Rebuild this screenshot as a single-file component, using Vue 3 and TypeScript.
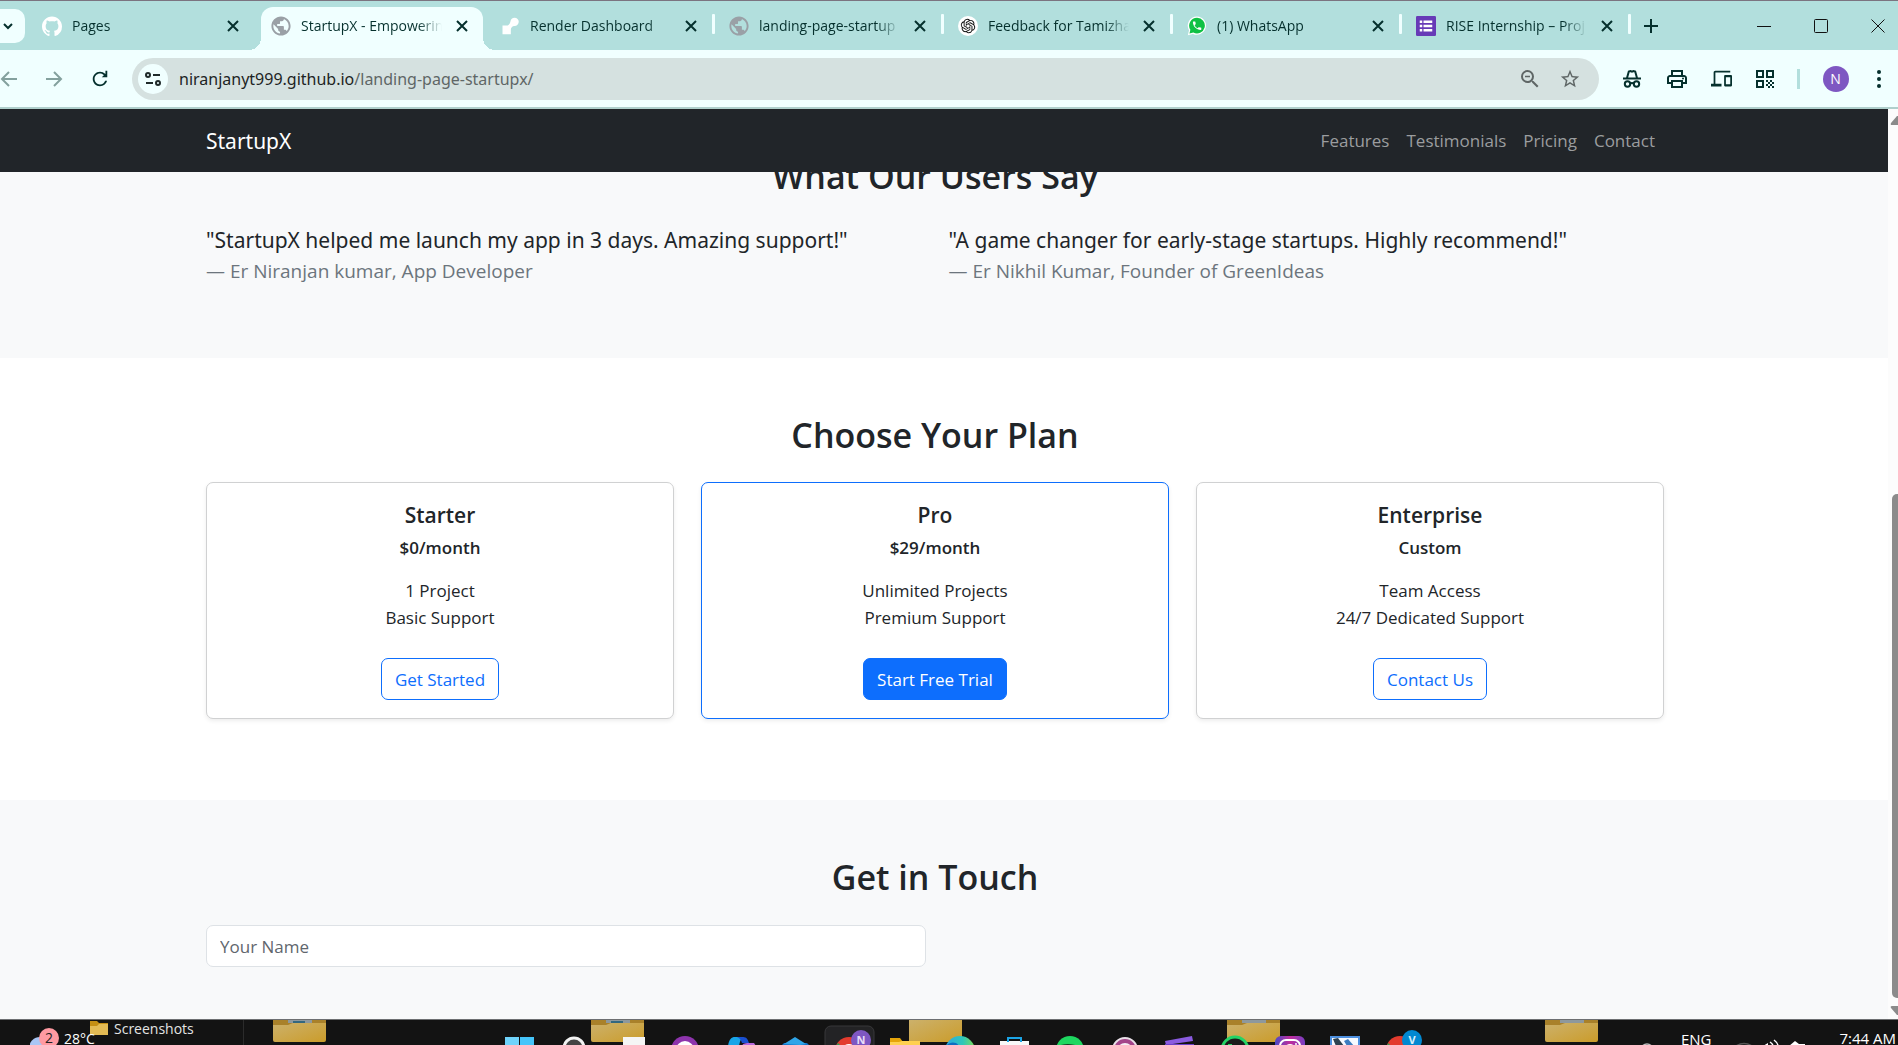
<script setup lang="ts">
import { ref } from 'vue'

interface Tab {
  title: string
  icon: string
  close: string
}
interface Plan {
  name: string
  price: string
  features: string[]
  action: string
  featured?: boolean
}

const globe =
  '<path fill="#9aa0a6" transform="translate(-1.800 -1.800) scale(1.15)" d="M12 2C6.48 2 2 6.48 2 12s4.48 10 10 10 10-4.48 10-10S17.52 2 12 2zm-1 17.93c-3.95-.49-7-3.85-7-7.93 0-.62.08-1.21.21-1.79L9 15v1c0 1.1.9 2 2 2v1.93zm6.9-2.54c-.26-.81-1-1.39-1.9-1.39h-1v-3c0-.55-.45-1-1-1H8v-2h2c.55 0 1-.45 1-1V7h2c1.1 0 2-.9 2-2v-.41c2.93 1.19 5 4.06 5 7.41 0 2.08-.8 3.97-2.1 5.39z"/>'

const favicons: Record<string, string> = {
  globe,
  github:
    '<path fill="#fff" transform="translate(0 .5) scale(1.5)" d="M8 0C3.58 0 0 3.58 0 8c0 3.54 2.29 6.53 5.47 7.59.4.07.55-.17.55-.38 0-.19-.01-.82-.01-1.49-2.01.37-2.53-.49-2.69-.94-.09-.23-.48-.94-.82-1.13-.28-.15-.68-.52-.01-.53.63-.01 1.08.58 1.23.82.72 1.21 1.87.87 2.33.66.07-.52.28-.87.51-1.07-1.78-.2-3.64-.89-3.64-3.95 0-.87.31-1.59.82-2.15-.08-.2-.36-1.02.08-2.12 0 0 .67-.21 2.2.82.64-.18 1.32-.27 2-.27s1.36.09 2 .27c1.53-1.04 2.2-.82 2.2-.82.44 1.1.16 1.92.08 2.12.51.56.82 1.27.82 2.15 0 3.07-1.87 3.75-3.65 3.95.29.25.54.73.54 1.48 0 1.07-.01 1.93-.01 2.2 0 .21.15.46.55.38A8.01 8.01 0 0 0 16 8c0-4.42-3.58-8-8-8z"/>',
  render:
    '<path fill="#fff" d="M17.5 2a5 5 0 0 0-4.9 4.2c-.3 2-1.7 5.3-4.600 5.300H3V22h10v-5.500c0-2.400 1.700-4.500 4.200-4.500h.3a5 5 0 0 0 0-10z"/>',
  chatgpt:
    '<circle cx="12" cy="12" r="12" fill="#fff"/><path fill="#111" transform="translate(3.400 3.400) scale(.72)" d="M22.2819 9.8211a5.9847 5.9847 0 0 0-.5157-4.9108 6.0462 6.0462 0 0 0-6.5098-2.9A6.0651 6.0651 0 0 0 4.9807 4.1818a5.9847 5.9847 0 0 0-3.9977 2.9 6.0462 6.0462 0 0 0 .7427 7.0966 5.98 5.98 0 0 0 .511 4.9107 6.051 6.051 0 0 0 6.5146 2.9001A5.9847 5.9847 0 0 0 13.2599 24a6.0557 6.0557 0 0 0 5.7718-4.2058 5.9894 5.9894 0 0 0 3.9977-2.9001 6.0557 6.0557 0 0 0-.7475-7.0729zm-9.022 12.6081a4.4755 4.4755 0 0 1-2.8764-1.0408l.1419-.0804 4.7783-2.7582a.7948.7948 0 0 0 .3927-.6813v-6.7369l2.02 1.1686a.071.071 0 0 1 .038.052v5.5826a4.504 4.504 0 0 1-4.4945 4.4944zm-9.6607-4.1254a4.4708 4.4708 0 0 1-.5346-3.0137l.142.0852 4.783 2.7582a.7712.7712 0 0 0 .7806 0l5.8428-3.3685v2.3324a.0804.0804 0 0 1-.0332.0615L9.74 19.9502a4.4992 4.4992 0 0 1-6.1408-1.6464zM2.3408 7.8956a4.485 4.485 0 0 1 2.3655-1.9728V11.6a.7664.7664 0 0 0 .3879.6765l5.8144 3.3543-2.0201 1.1685a.0757.0757 0 0 1-.071 0l-4.8303-2.7865A4.504 4.504 0 0 1 2.3408 7.872zm16.5963 3.8558L13.1038 8.364 15.1192 7.2a.0757.0757 0 0 1 .071 0l4.8303 2.7913a4.4944 4.4944 0 0 1-.6765 8.1042v-5.6772a.79.79 0 0 0-.407-.667zm2.0107-3.0231l-.142-.0852-4.7735-2.7818a.7759.7759 0 0 0-.7854 0L9.409 9.2297V6.8974a.0662.0662 0 0 1 .0284-.0615l4.8303-2.7866a4.4992 4.4992 0 0 1 6.6802 4.66zM8.3065 12.863l-2.02-1.1638a.0804.0804 0 0 1-.038-.0567V6.0742a4.4992 4.4992 0 0 1 7.3757-3.4537l-.142.0805L8.704 5.459a.7948.7948 0 0 0-.3927.6813zm1.0976-2.3654l2.602-1.4998 2.6069 1.4998v2.9994l-2.5974 1.4997-2.6067-1.4997Z"/>',
  whatsapp:
    '<path fill="#fff" d="M12 0.500A11 11 0 0 0 2.400 17L1 23l6.200-1.500A11 11 0 1 0 12 .5z"/><path fill="#0fc144" d="M12 2.200a9.400 9.400 0 0 0-8 14.300L3 21l4.600-1.100A9.400 9.400 0 1 0 12 2.200z"/><path fill="#fff" transform="translate(5.400 5) scale(.56)" d="M6.620 10.790c1.440 2.830 3.760 5.140 6.590 6.590l2.200-2.200c.27-.27.67-.36 1.020-.24 1.120.37 2.330.57 3.570.57.55 0 1 .45 1 1V20c0 .55-.45 1-1 1-9.390 0-17-7.610-17-17 0-.55.45-1 1-1h3.500c.55 0 1 .45 1 1 0 1.250.2 2.450.57 3.570.11.35.03.74-.25 1.020l-2.200 2.200z"/>',
  forms:
    '<rect width="24" height="24" rx="1.500" fill="#673ab7"/><path fill="#fff" d="M4.500 5.500h3v3h-3zM9 5.500h10.500v3H9zM4.500 10.500h3v3h-3zM9 10.500h10.500v3H9zM4.500 15.500h3v3h-3zM9 15.500h10.500v3H9z"/>',
}

const tabs: Tab[] = [
  { title: 'Pages', icon: 'github', close: 'Close Pages' },
  { title: 'StartupX - Empowerin', icon: 'globe', close: 'Close StartupX' },
  { title: 'Render Dashboard', icon: 'render', close: 'Close Render' },
  { title: 'landing-page-startup', icon: 'globe', close: 'Close landing page' },
  { title: 'Feedback for Tamizha', icon: 'chatgpt', close: 'Close Feedback' },
  { title: '(1) WhatsApp', icon: 'whatsapp', close: 'Close WhatsApp' },
  { title: 'RISE Internship – Proj', icon: 'forms', close: 'Close RISE' },
]
const active = ref(1)

const links = ['Features', 'Testimonials', 'Pricing', 'Contact']
const quotes = [
  { text: '"StartupX helped me launch my app in 3 days. Amazing support!"', by: '— Er Niranjan kumar, App Developer' },
  { text: '"A game changer for early-stage startups. Highly recommend!"', by: '— Er Nikhil Kumar, Founder of GreenIdeas' },
]
const plans: Plan[] = [
  { name: 'Starter', price: '$0/month', features: ['1 Project', 'Basic Support'], action: 'Get Started' },
  { name: 'Pro', price: '$29/month', features: ['Unlimited Projects', 'Premium Support'], action: 'Start Free Trial', featured: true },
  { name: 'Enterprise', price: 'Custom', features: ['Team Access', '24/7 Dedicated Support'], action: 'Contact Us' },
]
const visitor = ref('')

/* Taskbar buttons, each drawn on a 55 x 26 canvas showing the top of the icon */
const pinned: { label: string; art: string }[] = [
  { label: 'Start', art: '<path fill="#6fd3fb" d="M13 17h14v9H13z"/><path fill="#45c5fa" d="M28 17h14v9H28z"/>' },
  { label: 'Search', art: '<circle cx="27" cy="28" r="10" fill="#444" stroke="#f2f2f2" stroke-width="3"/>' },
  { label: 'Task view', art: '<path fill="#f5f5f5" d="M21 17h22v9H21z"/><path fill="#9b9b9b" d="M14 25h27v1H14z"/>' },
  { label: 'Assistant', art: '<circle cx="28" cy="30" r="14" fill="#8e34ad"/><circle cx="28" cy="30" r="9" fill="#fff"/><path fill="#8e34ad" d="M23 25h10v1H23z"/>' },
  { label: 'Copilot', art: '<path fill="#18a5e8" d="M16 26c1-6 3-9 7-9h9c-3 1-4 4-5 9z"/><path fill="#1a4fd0" d="M25 17h6c4 0 5 3 6 6h-7c-1-3-2-5-5-6z"/><path fill="#b869dc" d="M30 26c1-3 3-3 12-3l2 3z"/>' },
  { label: 'Editor', art: '<path fill="#0f73c9" d="M14 26l3-3h23l3 3z"/><path fill="#2fa5e8" d="M17 24l11-7 11 7-6 1z"/>' },
  { label: 'Chrome', art: '<rect x="3" y="6" width="49" height="30" rx="6" fill="#232325" stroke="#38383a"/><circle cx="27" cy="31" r="14" fill="#e33b2e"/><circle cx="27" cy="32" r="8" fill="#fff"/><path fill="#23a455" d="M14 26l2-3 3 3z"/><circle cx="39" cy="20" r="10" fill="#7e57c2"/><text x="39" y="24" text-anchor="middle" font-size="11" font-weight="700" fill="#e8def8">N</text>' },
  { label: 'File Explorer', art: '<path fill="#e5a50a" d="M13 18h10l3 4H13z"/><path fill="#ffd04f" d="M13 22l9 0 3-1h18v5H13z"/>' },
  { label: 'Edge', art: '<defs><linearGradient id="edge"><stop stop-color="#2aa9e6"/><stop offset=".6" stop-color="#2fc7b8"/><stop offset="1" stop-color="#7ddc55"/></linearGradient></defs><circle cx="28" cy="31" r="15" fill="url(#edge)"/><path fill="#0d6fc2" d="M14 26c3-4 10-5 13 0z"/>' },
  { label: 'Store', art: '<path fill="#f8f8f8" d="M13 21h29v5H13z"/><path fill="none" stroke="#1ba4e6" stroke-width="2" d="M21 22v-4h13v4"/>' },
  { label: 'Spotify', art: '<circle cx="28" cy="30" r="14" fill="#1ed760"/><path fill="none" stroke="#111" stroke-width="2" d="M19 26q8-2 18 1"/>' },
  { label: 'Podcasts', art: '<circle cx="28" cy="30" r="12" fill="#a4448a" stroke="#e9dfe8" stroke-width="2"/><circle cx="28" cy="31" r="8" fill="#f5eef4"/>' },
  { label: 'Clipchamp', art: '<path fill="#8a5be0" d="M13 21l27-5 1 5-27 4z"/><path fill="#6c40c9" d="M13 24h29v2H13z"/>' },
  { label: 'WhatsApp', art: '<circle cx="28" cy="30" r="13" fill="#1b1b1b" stroke="#25d366" stroke-width="3"/><path fill="#25d366" d="M21 24h4v2h-4z"/>' },
  { label: 'Instagram', art: '<defs><linearGradient id="insta"><stop stop-color="#4a4ac8"/><stop offset=".5" stop-color="#c02c9c"/><stop offset="1" stop-color="#7a3fc4"/></linearGradient></defs><rect x="13" y="16" width="30" height="28" rx="6" fill="url(#insta)"/><rect x="18" y="20" width="20" height="20" rx="6" fill="none" stroke="#fff" stroke-width="2"/><circle cx="28" cy="30" r="6" fill="#fff"/><circle cx="34" cy="24" r="1" fill="#fff"/>' },
  { label: 'Task Manager', art: '<path fill="#f7faff" stroke="#4d90e0" stroke-width="2" d="M14 17h28v12H14z"/><path fill="#2d4150" d="M16 19l5-1 6 8h-8z"/><path fill="#3c7cc0" d="M27 21l4-2 6 7h-7z"/>' },
  { label: 'Chrome second profile', art: '<circle cx="28" cy="30" r="14" fill="#e33b2e"/><circle cx="28" cy="33" r="8" fill="#fff"/><path fill="#23a455" d="M15 26l1-3 3 3z"/><circle cx="40" cy="20" r="10" fill="#0288d1"/><text x="40" y="24" text-anchor="middle" font-size="11" font-weight="700" fill="#d8f0fb">V</text>' },
]
const folders = [1, 2, 3, 4, 5]
</script>

<template>
  <div class="screen">
    <header class="tabstrip">
      <button class="tab-search" aria-label="Search tabs">
        <svg width="14" height="14" viewBox="0 0 14 14"><path d="M3 5l4 4 4-4" fill="none" stroke="currentColor" stroke-width="2" /></svg>
      </button>
      <div v-for="(tab, i) in tabs" :key="i" class="tab" :class="{ active: i === active, ruled: i > 1 }">
        <svg class="favicon" viewBox="0 0 24 24" v-html="favicons[tab.icon]"></svg>
        <button class="tab-title" @click="active = i">{{ tab.title }}</button>
        <button class="tab-close" :aria-label="tab.close">
          <svg width="12" height="12" viewBox="0 0 12 12"><path d="M1 1l10 10M11 1L1 11" stroke="currentColor" stroke-width="2" /></svg>
        </button>
      </div>
      <button class="new-tab" aria-label="New tab">
        <svg width="14" height="14" viewBox="0 0 14 14"><path d="M7 0v14M0 7h14" stroke="currentColor" stroke-width="2" /></svg>
      </button>
      <div class="window-buttons">
        <button aria-label="Minimize"><svg width="14" height="14" viewBox="0 0 14 14"><path d="M0 7.500h14" /></svg></button>
        <button aria-label="Maximize"><svg width="14" height="14" viewBox="0 0 14 14"><rect x=".5" y=".5" width="13" height="13" rx="1" /></svg></button>
        <button aria-label="Close window"><svg width="14" height="14" viewBox="0 0 14 14"><path d="M.5.5l13 13M13.500.5l-13 13" /></svg></button>
      </div>
    </header>

    <div class="toolbar">
      <button class="nav-button dim" aria-label="Back">
        <svg width="18" height="18" viewBox="0 0 18 18"><path d="M17 9H2M9 2L2 9l7 7" fill="none" stroke="currentColor" stroke-width="2" /></svg>
      </button>
      <button class="nav-button dim" aria-label="Forward">
        <svg width="18" height="18" viewBox="0 0 18 18"><path d="M1 9h15M9 2l7 7-7 7" fill="none" stroke="currentColor" stroke-width="2" /></svg>
      </button>
      <button class="nav-button" aria-label="Reload">
        <svg width="20" height="22" viewBox="1 0 22 24"><path fill="currentColor" d="M17.650 6.350A7.958 7.958 0 0 0 12 4c-4.420 0-7.990 3.580-7.990 8s3.570 8 7.990 8c3.730 0 6.840-2.550 7.730-6h-2.080A5.990 5.990 0 0 1 12 18c-3.310 0-6-2.690-6-6s2.690-6 6-6c1.660 0 3.140.69 4.220 1.780L14 10h6V3h-2v3.600z" /></svg>
      </button>
      <div class="omnibox">
        <button class="site-info" aria-label="View site information">
          <svg width="18" height="18" viewBox="0 0 18 18" fill="none" stroke="currentColor" stroke-width="2"><circle cx="4" cy="5" r="2" /><path d="M9 5h7M2 13h7" /><circle cx="14" cy="13" r="2" /></svg>
        </button>
        <a class="url" href="#"><span>niranjanyt999.github.io</span>/landing-page-startupx/</a>
        <button aria-label="Zoom">
          <svg width="24" height="24" viewBox="0 0 24 24"><path fill="currentColor" d="M15.500 14h-.79l-.28-.27A6.471 6.471 0 0 0 16 9.500 6.500 6.500 0 1 0 9.500 16c1.610 0 3.090-.59 4.230-1.570l.27.28v.79l5 4.990L20.490 19l-4.990-5zm-6 0C7.010 14 5 11.990 5 9.500S7.010 5 9.500 5 14 7.010 14 9.500 11.990 14 9.500 14zM7 8.700h5v1.500H7z" /></svg>
        </button>
        <button aria-label="Bookmark this tab">
          <svg width="22" height="22" viewBox="0 0 24 24"><path fill="currentColor" d="M22 9.240l-7.190-.62L12 2 9.190 8.630 2 9.240l5.460 4.730L5.820 21 12 17.270 18.180 21l-1.630-7.030L22 9.240zM12 15.400l-3.760 2.270 1-4.280-3.320-2.880 4.380-.38L12 6.100l1.710 4.040 4.380.38-3.320 2.880 1 4.280L12 15.400z" /></svg>
        </button>
      </div>
      <div class="actions">
        <button aria-label="Incognito">
          <svg width="20" height="20" viewBox="0 0 20 20" fill="none" stroke="currentColor" stroke-width="2"><path d="M1 9.500h18M5 9l1.800-6.500L8.500 2l1.500.6 1.500-.6 1.700.5L15 9" /><circle cx="5.500" cy="15" r="2.700" /><circle cx="14.500" cy="15" r="2.700" /><path d="M8 14.500q2-1 4 0" /></svg>
        </button>
        <button aria-label="Print">
          <svg width="24" height="24" viewBox="0 0 24 24"><path fill="currentColor" d="M19 8h-1V3H6v5H5c-1.660 0-3 1.340-3 3v6h4v4h12v-4h4v-6c0-1.660-1.340-3-3-3zM8 5h8v3H8V5zm8 12v2H8v-4h8v2zm2-2v-2H6v2H4v-4c0-.55.45-1 1-1h14c.55 0 1 .45 1 1v4h-2z" /><circle cx="18" cy="11.500" r="1" fill="currentColor" /></svg>
        </button>
        <button aria-label="Cast to device">
          <svg width="21" height="21" viewBox="0 0 24 24"><path fill="currentColor" d="M5 5h17V3H5c-1.100 0-2 .9-2 2v13H0v3h12v-3H5V5zm18 3h-7c-.55 0-1 .45-1 1v11c0 .55.45 1 1 1h7c.55 0 1-.45 1-1V9c0-.55-.45-1-1-1zm-1 10.500h-5v-8h5v8z" /></svg>
        </button>
        <button aria-label="QR code">
          <svg width="20" height="20" viewBox="0 0 20 20"><g fill="none" stroke="currentColor" stroke-width="2"><path d="M2 2h6v6H2zM12 2h6v6h-6zM2 12h6v6H2z" /></g><path fill="currentColor" d="M11 11h2v2h-2zM15 11h2v2h-2zM13 13h2v2h-2zM17 13h2v2h-2zM11 15h2v2h-2zM15 15h2v2h-2zM13 17h2v2h-2zM17 17h2v2h-2z" /></svg>
        </button>
        <span class="divider"></span>
        <button class="avatar" aria-label="Profile">N</button>
        <button class="menu" aria-label="Menu">
          <svg width="6" height="20" viewBox="0 0 6 20" fill="currentColor"><circle cx="3" cy="3" r="2" /><circle cx="3" cy="10" r="2" /><circle cx="3" cy="17" r="2" /></svg>
        </button>
      </div>
    </div>

    <div class="viewport">
      <main class="page">
        <nav class="navbar">
          <div class="container nav-row">
            <a class="brand" href="#">StartupX</a>
            <div class="links"><a v-for="link in links" :key="link" href="#">{{ link }}</a></div>
          </div>
        </nav>

        <section class="tinted testimonials">
          <div class="container">
            <h2>What Our Users Say</h2>
            <div class="quotes">
              <blockquote v-for="quote in quotes" :key="quote.by">
                <p>{{ quote.text }}</p>
                <footer>{{ quote.by }}</footer>
              </blockquote>
            </div>
          </div>
        </section>

        <section>
          <div class="container">
            <h2>Choose Your Plan</h2>
            <div class="plans">
              <article v-for="plan in plans" :key="plan.name" class="card" :class="{ featured: plan.featured }">
                <h5>{{ plan.name }}</h5>
                <h6>{{ plan.price }}</h6>
                <p><template v-for="(f, i) in plan.features" :key="f"><br v-if="i" />{{ f }}</template></p>
                <button>{{ plan.action }}</button>
              </article>
            </div>
          </div>
        </section>

        <section class="tinted contact">
          <div class="container">
            <h2>Get in Touch</h2>
            <form class="contact-form" @submit.prevent>
              <input v-model="visitor" type="text" placeholder="Your Name" aria-label="Your Name" />
            </form>
          </div>
        </section>
      </main>
      <div class="scrollbar" aria-hidden="true">
        <svg width="8" height="10" viewBox="0 0 8 10"><path fill="#8b8b8b" d="M1 8l6-7h1v9H2q-2 0-1-2z" /></svg>
        <span class="track-gap"></span>
        <span class="thumb"></span>
        <svg width="8" height="10" viewBox="0 0 8 10"><path fill="#8b8b8b" d="M1 2l6 7h1V0H2Q0 0 1 2z" /></svg>
      </div>
    </div>

    <footer class="taskbar">
      <div class="desktop-folders" aria-hidden="true">
        <svg v-for="n in folders" :key="n" width="53" height="22" viewBox="0 0 53 22">
          <defs><linearGradient :id="'f' + n" x2="1" y2="1"><stop stop-color="#ccb16b" /><stop offset="1" stop-color="#cb9c2a" /></linearGradient></defs>
          <path fill="#a9812a" d="M0 0h53v8H0z" />
          <path v-if="n !== 3" fill="#8e989c" d="M15 0h24v3H15z" />
          <path v-if="n < 3" fill="#33677f" d="M20 1h12v2H20z" />
          <path :fill="`url(#f${n})`" :d="n === 3 ? 'M0 0h53v22H0z' : 'M0 5h15l5-2h33v17q0 2-2 2H2q-2 0-2-2z'" />
        </svg>
      </div>
      <div class="widgets">
        <svg width="30" height="26" viewBox="0 0 30 26"><circle cx="10" cy="28" r="11" fill="#a9c6f5" /><circle cx="19" cy="18" r="10" fill="#ff9aa2" /></svg>
        <span class="alert">2</span>
        <span class="temperature">28°C</span>
      </div>
      <div class="desktop-item">
        <svg width="18" height="14" viewBox="0 0 18 14"><path fill="#c58f14" d="M0 0h7l2 2h9v5H0z" /><path fill="#e3bb55" d="M0 5h7l2-2h9v11H0z" /></svg>
        <span>Screenshots</span>
      </div>
      <div class="pinned">
        <button v-for="app in pinned" :key="app.label" :aria-label="app.label">
          <svg width="55" height="26" viewBox="0 0 55 26" v-html="app.art"></svg>
        </button>
      </div>
      <div class="tray">
        <svg width="14" height="26" viewBox="0 0 14 26"><circle cx="7" cy="30" r="6" fill="none" stroke="#bbb" stroke-width="1.500" /></svg>
        <span class="language">ENG</span>
        <svg class="tray-icons" width="86" height="26" viewBox="0 0 86 26"><path fill="none" stroke="#555" stroke-width="1.500" d="M7 26q8-5 16 0" /><path fill="#fff" d="M34 26l5-3v3z" /><path fill="none" stroke="#fff" stroke-width="1.500" d="M41 22q3 2 3 4M45 20q4 3 4 6" /><path fill="#fff" d="M60 26l6-5 4 3 6 0v2z" /></svg>
        <span class="clock">7:44 AM</span>
      </div>
    </footer>
  </div>
</template>

<style>
html,
body {
  margin: 0;
}
</style>

<style scoped>
.screen {
  display: flex;
  flex-direction: column;
  height: 100vh;
  overflow: hidden;
  font-family: 'Open Sans', 'Noto Sans', sans-serif;
  color: #212529;
  background: #fff;
}
.screen * {
  box-sizing: border-box;
}
button {
  font: inherit;
  color: inherit;
  border: 0;
  padding: 0;
  background: none;
}
svg {
  display: block;
  flex: none;
}
a {
  color: inherit;
  text-decoration: none;
}

/* Tab strip */
.tabstrip {
  display: flex;
  align-items: center;
  height: 50px;
  flex: none;
  border-top: 1px solid #7b7480;
  background: #b2dfdd;
  color: #05302d;
}
.tab-search {
  width: 25px;
  height: 34px;
  margin-right: 3px;
  border-radius: 0 10px 10px 0;
  background: #f0ffff;
}
.tab {
  position: relative;
  display: flex;
  align-items: center;
  align-self: stretch;
  width: 229px;
  padding: 0 15px 0 14px;
}
.tab.ruled::after {
  content: '';
  position: absolute;
  right: 0;
  top: 13px;
  width: 3px;
  height: 20px;
  border-radius: 1px;
  background: #f0ffff;
}
.tab.active::before {
  content: '';
  position: absolute;
  inset: 6px 3px 0 4px;
  border-radius: 12px 12px 0 0;
  background: #f0ffff;
}
.tab.active::after {
  content: '';
  position: absolute;
  left: -8px;
  right: -9px;
  bottom: 0;
  height: 12px;
  background:
    radial-gradient(circle at 0 0, transparent 12px, #f0ffff 12px) left / 12px 12px no-repeat,
    radial-gradient(circle at 100% 0, transparent 12px, #f0ffff 12px) right / 12px 12px no-repeat;
}
.tab > * {
  position: relative;
}
.favicon {
  width: 20px;
  height: 20px;
}
.tab-title {
  flex: 1;
  min-width: 0;
  margin: 0 6px 0 10px;
  overflow: hidden;
  white-space: nowrap;
  text-align: left;
  font-size: 14px;
  line-height: 20px;
  mask-image: linear-gradient(to left, transparent 5px, #000 29px);
}
.tab-close {
  width: 18px;
  height: 18px;
  display: grid;
  place-items: center;
}
.new-tab {
  margin-left: 13px;
}
.window-buttons {
  display: flex;
  margin-left: auto;
  margin-right: 13px;
  gap: 43px;
}
.window-buttons svg {
  fill: none;
  stroke: #111;
}
.tab-search svg {
  margin: 0 auto 0 1px;
}

/* Toolbar */
.toolbar {
  display: flex;
  align-items: center;
  height: 59px;
  flex: none;
  border-bottom: 2px solid #afcfcc;
  background: #f0ffff;
  color: #05302d;
}
.nav-button {
  width: 45px;
  display: flex;
}
.nav-button:last-of-type {
  width: 42px;
}
.nav-button.dim {
  color: #84a19e;
}
.omnibox {
  display: flex;
  align-items: center;
  flex: 1;
  height: 42px;
  padding: 0 18px 0 6px;
  border-radius: 21px;
  background: #d5e1e0;
  color: #5f6666;
  gap: 17px;
}
.site-info {
  display: grid;
  place-items: center;
  width: 30px;
  height: 30px;
  border-radius: 50%;
  background: #f0ffff;
  color: #1f2a2a;
}
.url {
  flex: 1;
  margin-left: -6px;
  font-family: 'Noto Sans', sans-serif;
  font-size: 16px;
}
.url span {
  color: #1d2424;
}
.actions {
  display: flex;
  align-items: center;
  justify-content: space-between;
  width: 299px;
  padding: 0 11px 0 23px;
}
.divider {
  width: 3px;
  height: 20px;
  background: #b2dfdd;
}
.avatar {
  width: 26px;
  height: 26px;
  border-radius: 50%;
  background: #7e57c2;
  color: #fff;
  font-size: 14px;
}
.menu {
  display: grid;
  justify-items: center;
  width: 16px;
}

/* Web page */
.viewport {
  display: flex;
  flex: 1;
  min-height: 0;
}
.page {
  display: flex;
  flex-direction: column;
  flex: 1;
  overflow: hidden;
  font-size: 17px;
  line-height: 27px;
}
.container {
  max-width: 1458px;
  margin: 0 auto;
}
.navbar {
  position: relative;
  z-index: 1;
  flex: none;
  height: 63px;
  padding-right: 18px;
  background: #212529;
}
.nav-row {
  display: flex;
  align-items: center;
  justify-content: space-between;
  height: 100%;
}
.brand {
  font-family: 'Noto Sans', sans-serif;
  font-size: 21px;
  line-height: 34px;
  color: #fff;
}
.links {
  display: flex;
  gap: 17px;
  padding-right: 9px;
  color: #9b9d9f;
}
section {
  flex: none;
  padding: 56px 18px 54px 0;
}
.tinted {
  background: #f8f9fa;
}
.testimonials {
  margin-top: -73px;
  height: 259px;
}
h2 {
  margin: 0 0 25px;
  font-size: 34px;
  line-height: 43px;
  font-weight: 600;
  text-align: center;
}
.quotes {
  display: grid;
  grid-template-columns: 1fr 1fr;
  gap: 27px;
}
blockquote {
  margin: 0;
}
blockquote p {
  margin: 0;
  font-family: 'Noto Sans', sans-serif;
  font-size: 21px;
  line-height: 34px;
}
blockquote footer {
  font-size: 19px;
  line-height: 28px;
  color: #6c757d;
}
.plans {
  display: grid;
  grid-template-columns: repeat(3, 1fr);
  gap: 27px;
  margin-bottom: 27px;
}
.card {
  padding: 18px;
  border: 1px solid #d0d1d2;
  border-radius: 7px;
  background: #fff;
  box-shadow: 0 2px 4px rgba(0, 0, 0, 0.075);
  text-align: center;
}
.card.featured {
  border-color: #0d6efd;
}
h5 {
  margin: 0 0 8px;
  font-size: 21px;
  line-height: 28px;
  font-weight: 600;
}
h6 {
  margin: 0 0 18px;
  font-size: 17px;
  line-height: 22px;
  font-weight: 600;
}
.card p {
  margin: 0 0 27px;
}
.card button {
  height: 42px;
  padding: 0 13px;
  border: 1px solid #0d6efd;
  border-radius: 7px;
  color: #0d6efd;
}
.card.featured button {
  background: #0d6efd;
  color: #fff;
}
.contact {
  flex: 1;
}
.contact h2 {
  margin-bottom: 26px;
}
.contact-form {
  display: grid;
  grid-template-columns: 1fr 1fr;
  gap: 18px;
}
.contact-form input {
  height: 42px;
  padding: 0 13px;
  border: 1px solid #dee2e6;
  border-radius: 7px;
  background: #fff;
  font: inherit;
  color: inherit;
}
.contact-form input::placeholder {
  color: #5f666d;
}
.scrollbar {
  display: flex;
  flex-direction: column;
  align-items: flex-end;
  width: 10px;
  padding: 6px 0 3px;
  background: #fcfcfc;
}
.track-gap {
  flex: 369;
}
.thumb {
  flex: 504;
  width: 6px;
  margin-bottom: 8px;
  border-radius: 5px 0 0 5px;
  background: #8b8b8b;
}

/* Taskbar */
.taskbar {
  position: relative;
  display: flex;
  flex: none;
  height: 26px;
  overflow: hidden;
  border-top: 1px solid #6d6f71;
  background: #131313;
  color: #fff;
}
.desktop-folders {
  position: absolute;
  top: 0;
  left: 273px;
  display: flex;
  gap: 265px;
}
.widgets {
  position: relative;
  width: 90px;
  padding-left: 30px;
}
.alert {
  position: absolute;
  left: 45px;
  top: 9px;
  font-size: 14px;
  line-height: 18px;
  color: #222;
}
.temperature {
  position: absolute;
  left: 64px;
  top: 9px;
  z-index: 1;
  font-size: 14px;
  line-height: 20px;
}
.desktop-item {
  display: flex;
  gap: 6px;
  width: 154px;
  padding-top: 1px;
  border-right: 1px solid #2b2b2b;
  font-size: 14px;
  line-height: 16px;
  color: #e4e4e4;
}
.pinned {
  position: relative;
  display: flex;
  margin-left: 248px;
}
.tray {
  display: flex;
  margin-left: auto;
  padding-right: 2px;
  font-size: 15px;
  line-height: 20px;
}
.language {
  margin: 9px 18px 0 27px;
}
.tray-icons {
  margin-right: 24px;
}
.clock {
  margin-top: 8px;
}
</style>
